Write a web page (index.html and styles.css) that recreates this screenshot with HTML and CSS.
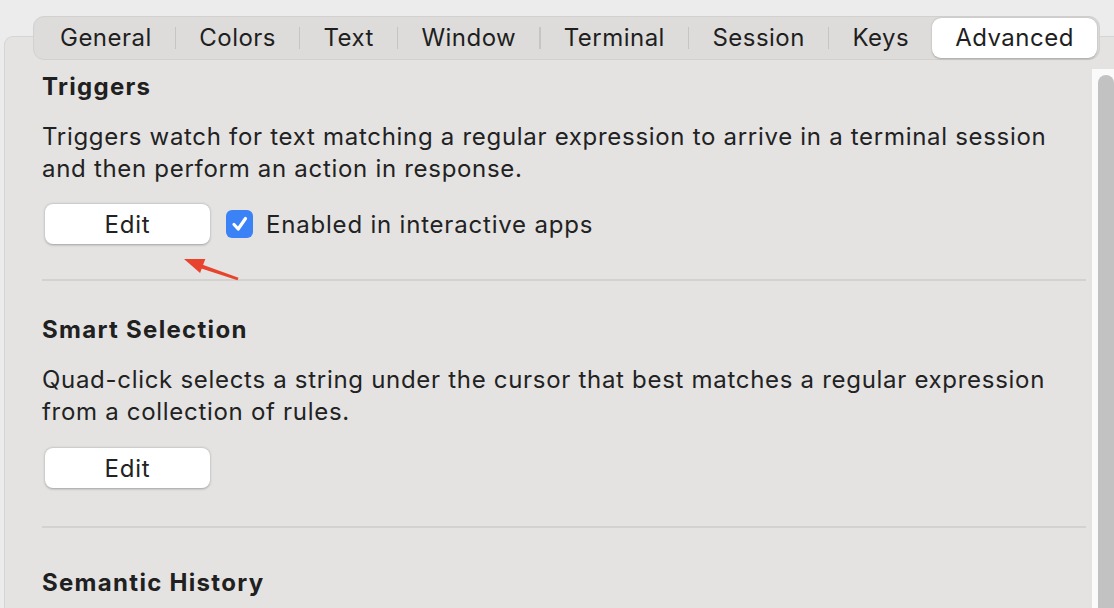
FILE: index.html
```html
<!DOCTYPE html>
<html>
<head>
<meta charset="utf-8">
<link rel="stylesheet" href="styles.css">
</head>
<body>
<div class="tabs-wrap">
  <div class="tabs">
    <div class="tab">General</div>
    <div class="sep"></div>
    <div class="tab">Colors</div>
    <div class="sep"></div>
    <div class="tab">Text</div>
    <div class="sep"></div>
    <div class="tab">Window</div>
    <div class="sep"></div>
    <div class="tab">Terminal</div>
    <div class="sep"></div>
    <div class="tab">Session</div>
    <div class="sep"></div>
    <div class="tab">Keys</div>
    <div class="tab active">Advanced</div>
  </div>
</div>
<div class="panel">
  <div class="content">
    <section class="sec first">
      <h2 class="title">Triggers</h2>
      <p class="desc">Triggers watch for text matching a regular expression to arrive in a terminal session and then perform an action in response.</p>
      <div class="row">
        <button class="btn">Edit</button>
        <label class="check">
          <span class="box"><svg width="22" height="22" viewBox="0 0 22 22"><path d="M5 11.5 L9.2 16 L16.5 5.5" fill="none" stroke="#fff" stroke-width="3.2" stroke-linecap="round" stroke-linejoin="round"/></svg></span>
          <span>Enabled in interactive apps</span>
        </label>
      </div>
      <svg class="arrow" width="70" height="30" viewBox="0 0 70 30">
        <polygon points="63.5,22.8 27,9.5 25.6,13.3 62.5,25.2" fill="#e8432d"/>
        <polygon points="9,4 30.3,3.9 25.1,17.9" fill="#e8432d"/>
      </svg>
    </section>
    <div class="divider"></div>
    <section class="sec second-sec">
      <h2 class="title">Smart Selection</h2>
      <p class="desc">Quad-click selects a string under the cursor that best matches a regular expression from a collection of rules.</p>
      <div class="row">
        <button class="btn">Edit</button>
      </div>
    </section>
    <div class="divider second"></div>
    <section class="sec third-sec">
      <h2 class="title">Semantic History</h2>
    </section>
  </div>
  <div class="scrollbar"><div class="thumb"></div></div>
</div>
</body>
</html>
```
FILE: styles.css
```css
* { box-sizing: border-box; }
html, body { margin: 0; padding: 0; }
body {
  width: 1114px;
  height: 608px;
  overflow: hidden;
  background: #ececec;
  font-family: Inter, "Noto Sans", "Liberation Sans", sans-serif;
  color: #1f1f1f;
}
.tabs-wrap {
  position: relative;
  z-index: 2;
  padding: 16px 0 0 33px;
  height: 60px;
}
.tabs {
  display: inline-flex;
  align-items: center;
  height: 44px;
  padding: 0 2px;
  background: #dddcdb;
  border: 1px solid #d2d1d0;
  border-radius: 11px;
}
.tab {
  font-size: 24px;
  line-height: 40px;
  padding: 0 23px 0 23px;
  color: #1f1f1f;
  letter-spacing: 0.48px;
}
.tab:first-child { padding-left: 24px; }
.tab.active {
  background: #fff;
  border-radius: 9px;
  box-shadow: 0 0.5px 2px rgba(0,0,0,0.25);
  height: 40px;
  padding: 0 23px;
}
.sep {
  width: 1.5px;
  height: 22px;
  background: #c6c5c4;
}
.panel {
  margin: -24px 0 0 4px;
  height: 572px;
  display: flex;
  background: #e4e3e2;
  border-top: 1px solid #d6d5d4;
  border-left: 1px solid #d6d5d4;
  border-top-left-radius: 9px;
  position: relative;
}
.content {
  flex: 1;
  padding: 34px 0 0 37px;
  position: relative;
}
.sec { position: relative; margin-right: 5px; }
.title {
  margin: 0;
  font-size: 24px;
  line-height: 32px;
  font-weight: 700;
  color: #202020;
  letter-spacing: 1.3px;
}
.desc {
  margin: 18px 0 0 0;
  font-size: 24px;
  line-height: 32px;
  color: #222;
  letter-spacing: 0.7px;
}
.row {
  display: flex;
  align-items: center;
  margin-top: 19px;
  gap: 16px;
}
.btn {
  width: 165px;
  height: 40px;
  margin-left: 3px;
  background: #fff;
  border: none;
  border-radius: 8px;
  box-shadow: 0 0.5px 2.5px rgba(0,0,0,0.3);
  font-family: inherit;
  font-size: 24px;
  letter-spacing: 0.8px;
  color: #222;
  padding: 0;
}
.check {
  display: flex;
  align-items: center;
  gap: 13px;
  font-size: 24px;
  letter-spacing: 0.8px;
  color: #222;
}
.box {
  width: 27px;
  height: 28px;
  border-radius: 6px;
  background: #3b82f6;
  display: flex;
  align-items: center;
  justify-content: center;
}
.arrow {
  position: absolute;
  left: 133px;
  top: 184px;
}
.divider {
  height: 2px;
  background: #d3d2d1;
  margin: 35px 6px 0 0;
}
.second-sec .title { margin-top: 33px; }
.second-sec .row { margin-top: 20px; }
.divider.second { margin-top: 38px; }
.third-sec .title { margin-top: 39px; }
.scrollbar {
  width: 22px;
  margin-top: 32px;
  background: #fafafa;
  padding-left: 6px;
  padding-top: 6px;
}
.thumb {
  height: 600px;
  background: #c2c2c2;
  border-radius: 8px 8px 0 0;
}
```
